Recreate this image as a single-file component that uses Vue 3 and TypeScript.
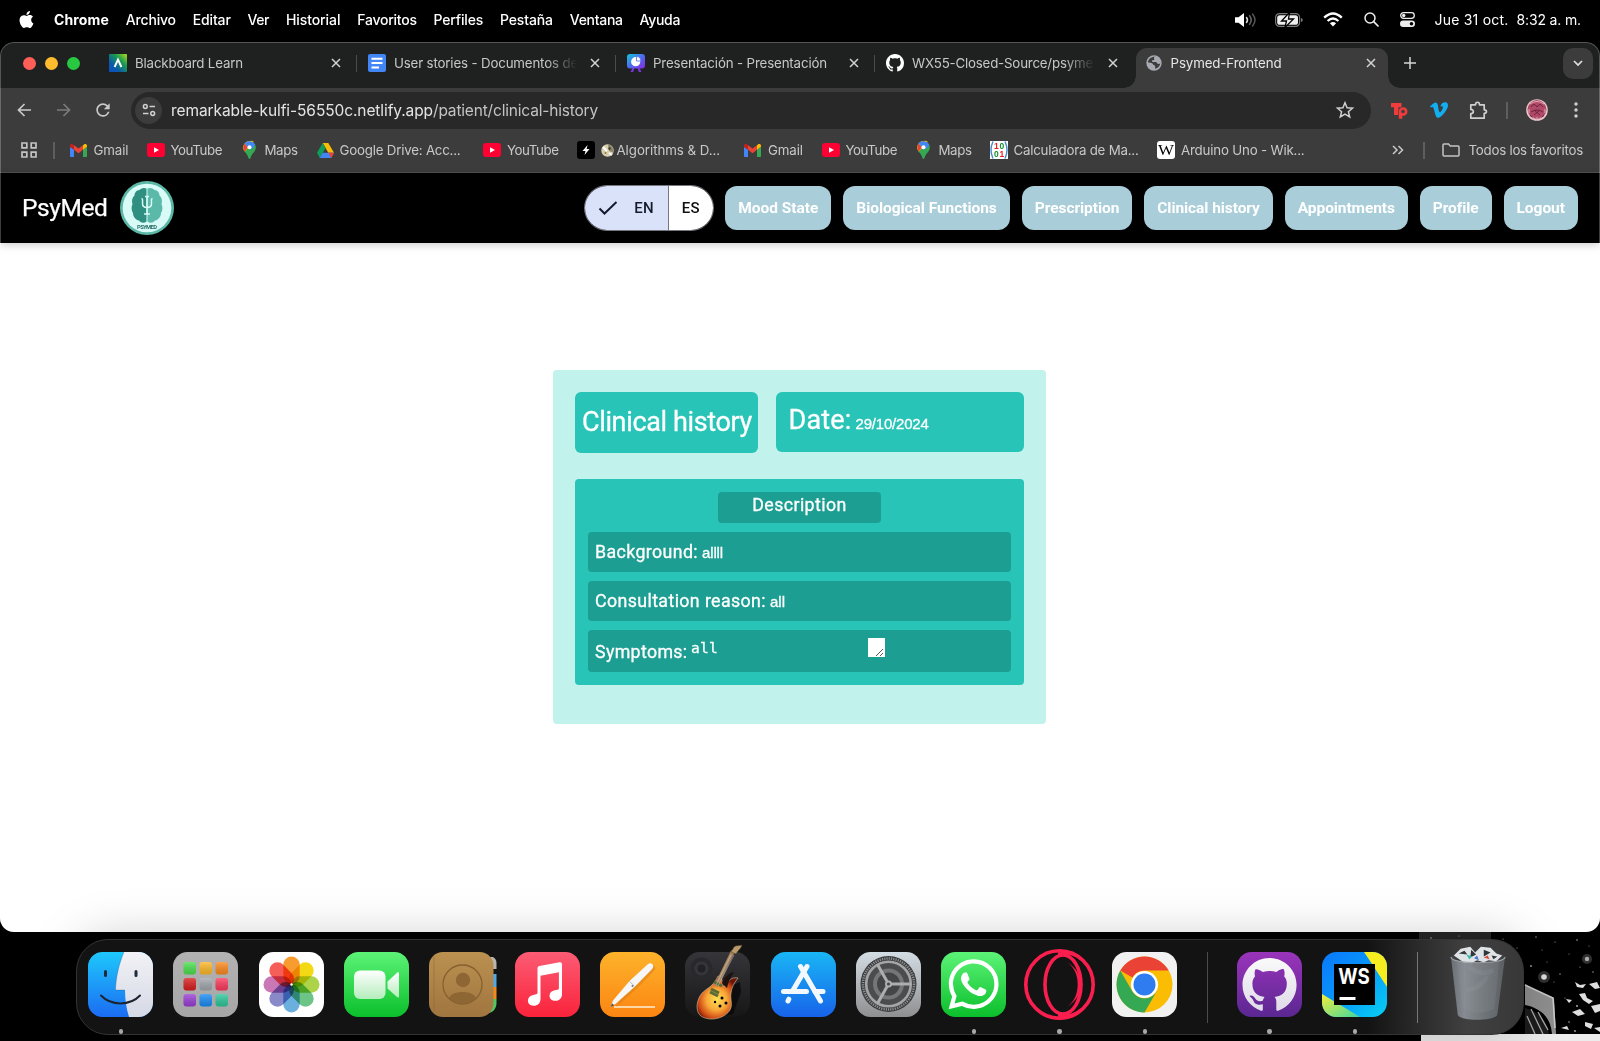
<script setup lang="ts">
import type { Directive } from 'vue'

/* Spreads a label evenly over the given number of pixels. */
const vFit: Directive<HTMLElement, number> = {
  mounted(el, { value }) {
    const count = (el.textContent ?? '').length
    const natural = el.getBoundingClientRect().width
    if (count > 0) el.style.letterSpacing = `${(value - natural) / count}px`
  },
}

interface Label { text: string; w: number }
interface Tab { icon: string; text: string; w: number; active?: boolean; sep?: boolean; faded?: boolean }
interface Bookmark extends Label { icon: string; iw: number; ih: number; pad: number; gap: number; emoji?: boolean }
interface DockApp { icon: string; running?: boolean }

const menus: Label[] = [
  { text: 'Archivo', w: 50 },
  { text: 'Editar', w: 38 },
  { text: 'Ver', w: 21.5 },
  { text: 'Historial', w: 54.5 },
  { text: 'Favoritos', w: 59.5 },
  { text: 'Perfiles', w: 49.5 },
  { text: 'Pestaña', w: 53 },
  { text: 'Ventana', w: 53 },
  { text: 'Ayuda', w: 40.5 },
]

const tabs: Tab[] = [
  { icon: 'blackboard', text: 'Blackboard Learn', w: 108, sep: true },
  { icon: 'docs', text: 'User stories - Documentos de', w: 184, sep: true, faded: true },
  { icon: 'slides', text: 'Presentación - Presentación', w: 174, sep: true },
  { icon: 'github', text: 'WX55-Closed-Source/psyme', w: 181, faded: true },
  { icon: 'globe', text: 'Psymed-Frontend', w: 111, active: true },
]

const bookmarks: Bookmark[] = [
  { icon: 'gmail', iw: 17, ih: 13, pad: 7, text: 'Gmail', w: 35, gap: 15 },
  { icon: 'youtube', iw: 18, ih: 14, pad: 6, text: 'YouTube', w: 51.5, gap: 18 },
  { icon: 'maps', iw: 13, ih: 18, pad: 9, text: 'Maps', w: 33, gap: 20.5 },
  { icon: 'drive', iw: 17, ih: 15, pad: 6, text: 'Google Drive: Acc...', w: 121, gap: 19 },
  { icon: 'youtube', iw: 18, ih: 14, pad: 6.5, text: 'YouTube', w: 51.5, gap: 22 },
  { icon: 'bolt', iw: 18, ih: 18, pad: 6, text: 'Algorithms & D...', w: 103.5, gap: 18, emoji: true },
  { icon: 'gmail', iw: 17, ih: 13, pad: 7, text: 'Gmail', w: 35, gap: 24 },
  { icon: 'youtube', iw: 18, ih: 14, pad: 6, text: 'YouTube', w: 51.5, gap: 18.5 },
  { icon: 'maps', iw: 13, ih: 18, pad: 8.5, text: 'Maps', w: 33, gap: 20 },
  { icon: 'matrix', iw: 18, ih: 18, pad: 6, text: 'Calculadora de Ma...', w: 125, gap: 18 },
  { icon: 'wiki', iw: 18, ih: 18, pad: 6, text: 'Arduino Uno - Wik...', w: 123.5, gap: 18.5 },
]

const navLinks: Label[] = [
  { text: 'Mood State', w: 80 },
  { text: 'Biological Functions', w: 140.5 },
  { text: 'Prescription', w: 84.5 },
  { text: 'Clinical history', w: 102.5 },
  { text: 'Appointments', w: 97 },
  { text: 'Profile', w: 45.5 },
  { text: 'Logout', w: 48.5 },
]

const dockMain: DockApp[] = [
  { icon: 'finder', running: true },
  { icon: 'launchpad' },
  { icon: 'photos' },
  { icon: 'facetime' },
  { icon: 'contacts' },
  { icon: 'music' },
  { icon: 'pages' },
  { icon: 'garageband' },
  { icon: 'appstore' },
  { icon: 'settings' },
  { icon: 'whatsapp', running: true },
  { icon: 'opera', running: true },
  { icon: 'chrome', running: true },
]
const dockRecent: DockApp[] = [
  { icon: 'githubdesktop', running: true },
  { icon: 'webstorm', running: true },
]

const petals = ['#f7941d', '#f2d600', '#a6cf38', '#5fbf7d', '#5ea8dc', '#7f7fc4', '#c66bb0', '#f5514b']
const pads = [
  ['#4be04e', '#fdb827', '#fb8a1e'],
  ['#d81e1e', '#a3a7ad', '#fc3a5d'],
  ['#9a3fd5', '#1a8cf5', '#2fc79a'],
]
const stars: number[][] = [
  [12, 6, 0.8], [28, 14, 0.5], [40, 4, 0.6], [55, 9, 1], [70, 12, 0.7], [84, 7, 0.6], [98, 16, 0.6], [117, 5, 0.7], [123, 18, 0.5],
  [128, 30, 0.5], [136, 10, 0.6], [141, 42, 0.7], [150, 22, 0.5], [158, 8, 0.8], [161, 35, 0.6],
  [170, 14, 0.5], [174, 40, 0.7], [158, 74, 1], [150, 90, 0.8], [177, 104, 0.8], [146, 66, 0.6], [135, 50, 0.5], [112, 34, 0.9], [156, 99, 0.9],
]
</script>

<template>
  <div class="screen">
    <svg class="sprite" width="0" height="0" aria-hidden="true">
      <defs>
        <linearGradient id="gBb" x1="1" y1="0" x2="0" y2="1"><stop offset="0" stop-color="#b4dc1a" /><stop offset=".35" stop-color="#1a9c50" /><stop offset=".7" stop-color="#0a5aa8" /><stop offset="1" stop-color="#0d4fc4" /></linearGradient>
        <linearGradient id="gSl" x1="0" y1="0" x2="1" y2="1"><stop offset="0" stop-color="#10c8d8" /><stop offset=".5" stop-color="#4c6cf0" /><stop offset="1" stop-color="#8a28e0" /></linearGradient>
        <linearGradient id="gFin" x1="0" y1="0" x2="0" y2="1"><stop offset="0" stop-color="#1ec8fc" /><stop offset="1" stop-color="#1b6cf2" /></linearGradient>
        <linearGradient id="gFin2" x1="0" y1="0" x2="0" y2="1"><stop offset="0" stop-color="#f2f2f5" /><stop offset="1" stop-color="#d5d9e6" /></linearGradient>
        <linearGradient id="gGreen" x1="0" y1="0" x2="0" y2="1"><stop offset="0" stop-color="#5cf377" /><stop offset="1" stop-color="#0bbf2b" /></linearGradient>
        <linearGradient id="gCam" x1="0" y1="0" x2="0" y2="1"><stop offset="0" stop-color="#fff" /><stop offset="1" stop-color="#b4edbb" /></linearGradient>
        <linearGradient id="gCon" x1="0" y1="0" x2="0" y2="1"><stop offset="0" stop-color="#bb9151" /><stop offset="1" stop-color="#a0753f" /></linearGradient>
        <linearGradient id="gMus" x1="0" y1="0" x2="0" y2="1"><stop offset="0" stop-color="#fb5c74" /><stop offset="1" stop-color="#fa233b" /></linearGradient>
        <linearGradient id="gPag" x1="0" y1="0" x2="0" y2="1"><stop offset="0" stop-color="#fdb32b" /><stop offset="1" stop-color="#fc8512" /></linearGradient>
        <linearGradient id="gApp" x1="0" y1="0" x2="0" y2="1"><stop offset="0" stop-color="#19b6f5" /><stop offset="1" stop-color="#1763ea" /></linearGradient>
        <linearGradient id="gSet" x1="0" y1="0" x2="0" y2="1"><stop offset="0" stop-color="#d3dde4" /><stop offset="1" stop-color="#8f8f91" /></linearGradient>
        <linearGradient id="gGit" x1="0" y1="0" x2="0" y2="1"><stop offset="0" stop-color="#9a34bb" /><stop offset="1" stop-color="#5a2791" /></linearGradient>
        <linearGradient id="gOct" x1="0" y1="0" x2="0" y2="1"><stop offset="0" stop-color="#fafafa" /><stop offset="1" stop-color="#dfdbe8" /></linearGradient>
        <linearGradient id="gWs" x1="0" y1="0" x2="1" y2="1"><stop offset="0" stop-color="#0a78fb" /><stop offset=".45" stop-color="#0894fb" /><stop offset="1" stop-color="#07d0f0" /></linearGradient>
        <linearGradient id="gWs2" x1="0" y1="0" x2="1" y2="1"><stop offset="0" stop-color="#f5ef3a" /><stop offset="1" stop-color="#3fd6a0" /></linearGradient>
        <linearGradient id="gTrash" x1="0" y1="0" x2="1" y2="0"><stop offset="0" stop-color="#6b7075" /><stop offset=".25" stop-color="#858b90" /><stop offset=".6" stop-color="#70757a" /><stop offset="1" stop-color="#5c6064" /></linearGradient>
        <linearGradient id="gPad" x1="0" y1="0" x2="0" y2="1"><stop offset="0" stop-color="#fff" stop-opacity=".22" /><stop offset="1" stop-color="#000" stop-opacity=".14" /></linearGradient>
        <linearGradient id="gGray" x1="0" y1="0" x2="0" y2="1"><stop offset="0" stop-color="#b2b2b2" /><stop offset="1" stop-color="#a6a6a6" /></linearGradient>
        <linearGradient id="gDark" x1="0" y1="0" x2="0" y2="1"><stop offset="0" stop-color="#36363a" /><stop offset="1" stop-color="#161617" /></linearGradient>
        <radialGradient id="gBody" cx=".48" cy=".55" r=".55"><stop offset="0" stop-color="#fee154" /><stop offset=".45" stop-color="#f9a838" /><stop offset=".8" stop-color="#cf4a16" /><stop offset="1" stop-color="#6b1508" /></radialGradient>
        <clipPath id="tile"><rect width="65" height="65" rx="14.500" /></clipPath>
      </defs>

      <!-- browser icons -->
      <symbol id="blackboard" viewBox="0 0 18 18"><rect width="18" height="18" rx="1" fill="url(#gBb)" /><path d="M5.600 13 9 5.500l3.400 7.500" fill="none" stroke="#fff" stroke-width="1.900" /></symbol>
      <symbol id="docs" viewBox="0 0 18 18"><rect width="18" height="18" rx="2" fill="#4285f4" /><path d="M3.500 4.700h11M3.500 9h11M3.500 13.400h7.500" stroke="#fff" stroke-width="2" /></symbol>
      <symbol id="slides" viewBox="0 0 18 18"><rect width="18" height="14.500" rx="3" fill="url(#gSl)" /><path d="m5.500 14-2 4h2.700l1.300-4zM12.500 14l2 4h-2.700l-1.300-4z" fill="#7a35e0" /><circle cx="8.700" cy="7.700" r="4.600" fill="#fff" /><path d="M9.500 7V2.500A4.500 4.500 0 0 1 13.800 7z" fill="#fff" stroke="#5a78f0" stroke-width=".9" /></symbol>
      <symbol id="github" viewBox="0 0 16 16"><path fill="#fff" d="M8 0C3.580 0 0 3.580 0 8c0 3.540 2.290 6.530 5.470 7.590.4.070.55-.17.55-.38 0-.19-.01-.82-.01-1.490-2.010.37-2.530-.49-2.690-.94-.09-.23-.48-.94-.82-1.130-.28-.15-.68-.52-.01-.53.63-.01 1.080.58 1.230.82.72 1.210 1.870.87 2.330.66.070-.52.280-.87.510-1.070-1.780-.2-3.640-.89-3.640-3.950 0-.87.310-1.590.82-2.150-.08-.2-.36-1.020.08-2.120 0 0 .67-.21 2.200.82.64-.18 1.320-.27 2-.27.68 0 1.360.09 2 .27 1.530-1.040 2.200-.82 2.200-.82.44 1.100.16 1.920.08 2.120.51.56.82 1.270.82 2.150 0 3.070-1.870 3.750-3.650 3.950.29.25.54.73.54 1.480 0 1.070-.01 1.930-.01 2.200 0 .21.15.46.55.38A8.013 8.013 0 0 0 16 8c0-4.420-3.580-8-8-8z" /></symbol>
      <symbol id="globe" viewBox="0 0 16 16"><circle cx="8" cy="8" r="7.700" fill="#a6a9b0" /><path d="M9.500 1.800c-1.500.2-2 1-1.300 1.900.5.800-.2 1.500-1.500 1.600-1.200.2-.8 1.300-.2 1.700h3c1.600.2 1.500 1.700 2.600 2 1 .2 1.600-.5 2.200-.4-.4 2.500-2.500 4.900-5 5.200-.6-1 .2-1.900-.2-2.800-.5-1.100-2.300-.9-2.400-2.200C5.500 7.500 3 7.600 1.900 7.300 2.300 4 5.500 1.400 9.500 1.800z" fill="#3c3c3c" /></symbol>
      <symbol id="gmail" viewBox="0 0 17 13"><path d="M0 3v9c0 .6.4 1 1 1h3V5.500z" fill="#4285f4" /><path d="M17 3v9c0 .6-.4 1-1 1h-3V5.500z" fill="#34a853" /><path d="M13 1.300V5.700l4-3V1.800C17 .2 15.200-.5 14 .4z" fill="#fbbc04" /><path d="M0 2.700v-1C0 .2 1.800-.5 3 .4L4 1.200v4.500z" fill="#c5221f" /><path d="M4 1.200 8.500 4.600 13 1.200v4.600L8.500 9.200 4 5.800z" fill="#ea4335" /></symbol>
      <symbol id="youtube" viewBox="0 0 18 14"><rect width="18" height="14" rx="3" fill="#f03" /><path d="M7 4.200v5.600L12 7z" fill="#fff" /></symbol>
      <symbol id="maps" viewBox="0 0 13 18"><path d="M6.500 0A6.300 6.300 0 0 1 12.800 6.400c0 4.300-4 5.600-5.200 10.300-.5 1.700-1.700 1.700-2.200 0C4.200 12 .2 10.700.2 6.400A6.300 6.300 0 0 1 6.500 0z" fill="#34a853" /><path d="M2 10.600 10.800.5a6.300 6.300 0 0 0-4.300-.5A6.300 6.300 0 0 0 .2 6.400c0 1.800.8 3 1.800 4.200z" fill="#fbbc04" /><path d="M4.800 6.200 1.600 2.500A6.500 6.500 0 0 0 .6 8.600L2 10.600z" fill="#ea4335" /><path d="M1.600 2.500A6.300 6.300 0 0 1 12.300 4L8.500 8.500 4.600 6z" fill="#4285f4" /><circle cx="6.500" cy="6.300" r="2" fill="#fff" /></symbol>
      <symbol id="drive" viewBox="0 0 17 15"><path d="M5.700 0h5.600L17 9.800h-5.700z" fill="#fbbc04" /><path d="M5.700 0 0 9.800 2.800 15l5.800-10z" fill="#0f9d58" /><path d="M5.600 9.800H17L14.200 15H2.800z" fill="#4285f4" /><path d="M11.300 9.800H17L14.200 15z" fill="#ea4335" /></symbol>
      <symbol id="bolt" viewBox="0 0 18 18"><rect width="18" height="18" rx="3" fill="#000" /><path d="M10.600 4 5.500 9.900h3L7.500 14l5-6H9.600z" fill="#fff" /></symbol>
      <symbol id="matrix" viewBox="0 0 18 18"><rect width="18" height="18" fill="#fff" /><path d="M3 .5q-4 8.500 0 17M15 .5q4 8.500 0 17" fill="none" stroke="#4a90c8" stroke-width="1.500" /></symbol>
      <symbol id="wiki" viewBox="0 0 18 18"><rect width="18" height="18" rx="3" fill="#fff" /></symbol>

      <!-- dock icons -->
      <symbol id="finder" viewBox="0 0 65 65"><g clip-path="url(#tile)"><rect width="65" height="65" fill="url(#gFin)" /><path d="M36 0C31 12 28 25 27.500 38h9.500c0 10 1.500 19 4 27h24V0z" fill="url(#gFin2)" /></g><path d="M17.500 19.500v4M48 19.500v4" stroke="#1f2b3a" stroke-width="3" stroke-linecap="round" /><path d="M13 43.500c10 10.500 29 10.500 39 0" fill="none" stroke="#1b2430" stroke-width="2" stroke-linecap="round" /><path d="M36 0C31 12 28 25 27.500 38h9.500" fill="none" stroke="#1d3a5a" stroke-opacity=".35" stroke-width=".7" /></symbol>
      <symbol id="launchpad" viewBox="0 0 65 65"><rect width="65" height="65" rx="14.500" fill="url(#gGray)" /><g v-for="(row, r) in pads" :key="r"><g v-for="(c, i) in row" :key="i" :transform="`translate(${10.500 + i * 16} ${10 + r * 16})`"><rect width="12.500" height="12.500" rx="3" :fill="c" /><rect width="12.500" height="12.500" rx="3" fill="url(#gPad)" /></g></g></symbol>
      <symbol id="photos" viewBox="0 0 65 65"><rect width="65" height="65" rx="14.500" fill="#fff" /><rect v-for="(c, i) in petals" :key="c" class="petal" x="24.300" y="4.500" width="16.400" height="28" rx="8.200" :fill="c" :transform="`rotate(${i * 45} 32.500 32.500)`" /><circle cx="32.500" cy="32.500" r="1.200" fill="#fff" /></symbol>
      <symbol id="facetime" viewBox="0 0 65 65"><rect width="65" height="65" rx="14.500" fill="url(#gGreen)" /><rect x="10" y="18.500" width="31.500" height="28.500" rx="6" fill="url(#gCam)" /><path d="M43.500 29.500 53 20.700c1-.8 2-.4 2 .8v22.800c0 1.200-1 1.600-2 .8L43.500 36.500z" fill="url(#gCam)" /></symbol>
      <symbol id="contacts" viewBox="0 0 69 65"><path d="M55 5h9c2 1 3.500 3 3.500 6v6H60z" fill="#b9b4ad" /><path d="M60 22h7.500v13H60z" fill="#4fa8ea" /><path d="M60 35h7.500v12H60z" fill="#f48a1c" /><path d="M60 47h7.500v4c0 5-3 9-7.500 10z" fill="#50c860" /><rect width="64.500" height="65" rx="14" fill="url(#gCon)" /><path d="M5 4.500v56" stroke="#8e6734" stroke-width="1" opacity=".5" /><circle cx="33.500" cy="32.500" r="19.500" fill="none" stroke="#86602f" stroke-width="1.300" /><circle cx="34" cy="28" r="7.200" fill="#8e6634" /><path d="M20 46c3-8 24-8 27 0-6 7-21 7-27 0z" fill="#8e6634" /></symbol>
      <symbol id="music" viewBox="0 0 65 65"><rect width="65" height="65" rx="14.500" fill="url(#gMus)" /><path d="M22.500 16.500c0-1.500.7-2.300 2-2.600l20-3.700c1.600-.3 2.500.4 2.500 2v30c0 4-2.800 6.600-6.700 6.600-3.400 0-5.800-1.900-5.800-5 0-3 2-4.900 5.300-5.500l2.700-.6c1-.2 1.400-.8 1.400-1.800V20.300L25.500 23.700v23c0 4.300-2.800 7.100-6.900 7.100-3.400 0-5.700-2-5.700-5.200 0-3 2-5 5.300-5.700l2.800-.6c1-.2 1.500-.8 1.500-1.800z" fill="#fff" /></symbol>
      <symbol id="pages" viewBox="0 0 65 65"><rect width="65" height="65" rx="14.500" fill="url(#gPag)" /><path d="M14 55h41" stroke="#fff0d8" stroke-width="1.400" /><path d="M15 52 31 29.500 48 13c1.700-1.700 3.600-1.500 4.800-.3s1.300 3-.3 4.700L35.500 35 14 54z" fill="#c96d10" opacity=".35" transform="translate(1.500 1.500)" /><path d="M10.500 55 13 48.500 29.500 29 47.500 12.500c1.700-1.500 3.600-1.500 4.800-.3s1.300 3-.2 4.700L35 34.500 16 51.500z" fill="#f6f6f6" /><path d="m29.500 29.500 5 4.500" stroke="#aaa" stroke-width=".8" /><circle cx="32.500" cy="34" r="1" fill="#777" /><path d="m10.500 55 1.500-3.800 2.300 2z" fill="#555" /></symbol>
      <symbol id="garageband" viewBox="0 0 65 65"><rect width="65" height="65" rx="14.500" fill="url(#gDark)" /><circle cx="16.500" cy="16.500" r="11" fill="#29292d" /><circle cx="16.500" cy="16.500" r="7" fill="#35353a" /><circle cx="16.500" cy="16.500" r="4" fill="#222226" /><path d="M43 35 55 30l1 10-8 22-12 3z" fill="#050505" opacity=".7" /><path d="M33 24c-2 4-3 6-6 9-4 4-10 6-13 13-4 9-2 18 6 20 9 3 21-1 25-8 3-6 0-10 1-17 .5-5 3-10 7-15-5-1-8 1-10 4l-3 4c-3 0-3-2-3-5 0-3-2-5-4-5z" fill="url(#gBody)" stroke="#d9c7a0" stroke-width=".6" /><path d="M37 31c2-5 6-10 12-11-4 6-6 11-7 16z" fill="#1e1210" /><path d="m31 34 17-35" stroke="#a78560" stroke-width="4" /><path d="m46 0 3-5c2-2 5-1 8-2-1 4-4 5-6 9z" fill="#b99a6a" stroke="#4a3a25" stroke-width=".5" /><path d="m29 30 8 4M26 37l8 4M25 40l8 4" stroke="#5a6a35" stroke-width="3" /><path d="m46 3-15 30M49 3 33 34" stroke="#eee" stroke-width=".4" /><circle cx="37" cy="46" r="1.500" /><circle cx="41" cy="51" r="1.500" /><circle cx="35" cy="54" r="1.500" /><circle cx="30" cy="50" r="1.200" /></symbol>
      <symbol id="appstore" viewBox="0 0 65 65"><rect width="65" height="65" rx="14.500" fill="url(#gApp)" /><g stroke="#f3f8ff" stroke-width="5" stroke-linecap="round" fill="none"><path d="M12.500 39.500h23M44 39.500h8" /><path d="M36 14.500 21.800 38.500M17.800 47.200l-.8 1.800" /><path d="M29.500 14.500 49.500 49" /></g></symbol>
      <symbol id="settings" viewBox="0 0 65 65"><rect width="65" height="65" rx="14.500" fill="url(#gSet)" /><circle cx="32.500" cy="32" r="28" fill="#3c3d3f" /><circle cx="32.500" cy="32" r="25.500" fill="none" stroke="#8e9092" stroke-width="2.500" stroke-dasharray="1.200 1.100" /><circle cx="32.500" cy="32" r="22.300" fill="#4a4c4e" stroke="#a3a5a7" stroke-width="2.600" /><circle cx="32.500" cy="32" r="13.500" fill="#434547" stroke="#747678" stroke-width="4" /><path d="M32.500 32h22.500M32.500 32 21.500 12.500M32.500 32 21.500 51.500" stroke="#acaeb0" stroke-width="3" /><circle cx="32.500" cy="32" r="3.500" fill="#acaeb0" /><circle cx="32.500" cy="32" r="1.600" fill="#48494b" /></symbol>
      <symbol id="whatsapp" viewBox="0 0 65 65"><rect width="65" height="65" rx="14.500" fill="url(#gGreen)" /><path transform="translate(7.500 7.200) scale(2.090)" fill="#fff" d="M17.472 14.382c-.297-.149-1.758-.867-2.030-.967-.273-.099-.471-.148-.67.150-.197.297-.767.966-.94 1.164-.173.199-.347.223-.644.075-.297-.150-1.255-.463-2.390-1.475-.883-.788-1.480-1.761-1.653-2.059-.173-.297-.018-.458.130-.606.134-.133.298-.347.446-.520.149-.174.198-.298.298-.497.099-.198.050-.371-.025-.520-.075-.149-.669-1.612-.916-2.207-.242-.579-.487-.5-.669-.510-.173-.008-.371-.01-.57-.01-.198 0-.52.074-.792.372-.272.297-1.040 1.016-1.040 2.479 0 1.462 1.065 2.875 1.213 3.074.149.198 2.096 3.200 5.077 4.487.709.306 1.262.489 1.694.625.712.227 1.360.195 1.871.118.571-.085 1.758-.719 2.006-1.413.248-.694.248-1.289.173-1.413-.074-.124-.272-.198-.57-.347m-5.421 7.403h-.004a9.870 9.870 0 0 1-5.031-1.378l-.361-.214-3.741.982.998-3.648-.235-.374a9.860 9.860 0 0 1-1.510-5.260c.001-5.450 4.436-9.884 9.888-9.884 2.640 0 5.122 1.030 6.988 2.898a9.825 9.825 0 0 1 2.893 6.994c-.003 5.450-4.437 9.884-9.885 9.884m8.413-18.297A11.815 11.815 0 0 0 12.050 0C5.495 0 .16 5.335.157 11.892c0 2.096.547 4.142 1.588 5.945L.057 24l6.305-1.654a11.882 11.882 0 0 0 5.683 1.448h.005c6.554 0 11.890-5.335 11.893-11.893a11.821 11.821 0 0 0-3.480-8.413z" /></symbol>
      <symbol id="opera" viewBox="0 0 65 65"><g fill="none" stroke="#fa1e4e" stroke-width="3.600"><circle cx="32.500" cy="32.500" r="33.700" /><ellipse cx="36" cy="32.500" rx="18" ry="29.500" /></g><path d="M39.500 10c15 8 15 37 0 45 19-10 19-35 0-45z" fill="#fa1e4e" /><path d="M31 1.500c10-1 18 1 23 6M31 63.500c10 1 18-1 23-6" fill="none" stroke="#fa1e4e" stroke-width="2.500" /></symbol>
      <symbol id="chrome" viewBox="0 0 65 65"><rect width="65" height="65" rx="14.500" fill="#f1f1f1" /><g transform="translate(32.500 32.500)"><circle r="28" fill="#fbbc04" /><path d="M-24.200-14A28 28 0 0 1 24.200-14H0A14 14 0 0 0-12.100-7z" fill="#ea4335" /><path d="M-24.200-14A28 28 0 0 0 0 28L12.100 7A14 14 0 0 1-12.100 7z" fill="#34a853" /><circle r="13.600" fill="#fff" /><circle r="11" fill="#2f7bf0" /></g></symbol>
      <symbol id="githubdesktop" viewBox="0 0 65 65"><rect width="65" height="65" rx="14.500" fill="url(#gGit)" /><path transform="translate(5.500 6) scale(3.380)" fill="url(#gOct)" d="M8 0C3.580 0 0 3.580 0 8c0 3.540 2.290 6.530 5.470 7.590.4.070.55-.17.55-.38 0-.19-.01-.82-.01-1.490-2.010.37-2.530-.49-2.690-.94-.09-.23-.48-.94-.82-1.130-.28-.15-.68-.52-.01-.53.63-.01 1.080.58 1.230.82.72 1.210 1.870.87 2.330.66.070-.52.280-.87.510-1.070-1.780-.2-3.640-.89-3.640-3.950 0-.87.310-1.590.82-2.150-.08-.2-.36-1.020.08-2.120 0 0 .67-.21 2.200.82.64-.18 1.320-.27 2-.27.68 0 1.360.09 2 .27 1.530-1.040 2.200-.82 2.200-.82.44 1.100.16 1.920.08 2.120.51.56.82 1.270.82 2.150 0 3.070-1.870 3.750-3.650 3.950.29.25.54.73.54 1.480 0 1.070-.01 1.930-.01 2.200 0 .21.15.46.55.38A8.013 8.013 0 0 0 16 8c0-4.420-3.580-8-8-8z" /></symbol>
      <symbol id="webstorm" viewBox="0 0 65 65"><g clip-path="url(#tile)"><rect width="65" height="65" fill="url(#gWs)" /><path d="M42 0h23v35L50 12z" fill="#f6ec20" /><path d="M0 42 38 65H0z" fill="url(#gWs2)" /></g><rect x="12" y="12" width="41" height="41" fill="#000" /><rect x="17.500" y="45" width="16" height="3" fill="#fff" /></symbol>
    </svg>

    <svg class="wallpaper" viewBox="0 0 181 109" width="181" height="109" aria-hidden="true">
      <rect width="72" height="8" fill="#262626" />
      <circle v-for="(s, i) in stars" :key="i" :cx="s[0]" :cy="s[1]" :r="s[2]" fill="#a8a8a8" />
      <circle cx="125" cy="45" r="6" fill="#777" opacity=".4" /><circle cx="125" cy="45" r="2.800" fill="#ddd" />
      <circle cx="168" cy="27" r="5" fill="#777" opacity=".4" /><circle cx="168" cy="27" r="2.200" fill="#aaa" />
      <path d="m156 50 5 3 6-1-3 4-6-1zM170 52l8-2 3 6-5 1zM160 62l6-1 2 5 6 3-4 3-6-4zM147 67l6 1-3 3zM172 74l9-2v7l-5 2zM153 80l8-3 5 5-7 2zM166 90l8 2-2 5-6-3zM142 96l6-2 2 4zM175 96l6-1v5z" fill="#dedede" />
      <path d="M106 52c8 6 20 10 29 14l2 36h-4C132 86 122 76 106 73z" fill="#8f8f8f" />
      <path d="M106 53 134 66l2 30" fill="none" stroke="#ccc" stroke-width="1.500" />
      <path d="M106 76c14 4 22 12 24 26h-24z" fill="#1c1c1c" /><path d="m112 77 12 25M108 84l8 18M119 80l10 18" stroke="#aaa" stroke-width="1.300" />
      <rect x="2" y="102" width="179" height="7" fill="#ececec" />
    </svg>

    <header class="menubar">
      <svg class="apple" viewBox="0 0 24 24" width="17" height="17"><path fill="#fff" d="M12.152 6.896c-.948 0-2.415-1.078-3.960-1.040-2.040.027-3.910 1.183-4.961 3.014-2.117 3.675-.546 9.103 1.519 12.090 1.013 1.454 2.208 3.090 3.792 3.039 1.520-.065 2.090-.987 3.935-.987 1.831 0 2.350.987 3.960.948 1.637-.026 2.676-1.480 3.676-2.948 1.156-1.688 1.636-3.325 1.662-3.415-.039-.013-3.182-1.221-3.220-4.857-.026-3.040 2.480-4.494 2.597-4.559-1.429-2.090-3.623-2.324-4.390-2.376-2-.156-3.675 1.090-4.610 1.090zM15.530 3.830c.843-1.012 1.400-2.427 1.245-3.830-1.207.052-2.662.805-3.532 1.818-.780.896-1.454 2.338-1.273 3.714 1.338.104 2.715-.688 3.559-1.701" /></svg>
      <nav class="menus">
        <b v-fit="55">Chrome</b>
        <span v-for="m in menus" :key="m.text" v-fit="m.w">{{ m.text }}</span>
      </nav>
      <div class="status">
        <svg width="22" height="16" viewBox="0 0 22 16"><path d="M0 5.200h3.500L9 1v14l-5.500-4.200H0z" fill="#fff" /><g fill="none" stroke-width="1.500" stroke-linecap="round"><path d="M11.500 5.500q2 2.500 0 5" stroke="#ddd" /><path d="M14.500 3.700q3.500 4.300 0 8.600" stroke="#666" /><path d="M17.500 2q5 6 0 12" stroke="#555" /></g></svg>
        <svg class="battery" width="28" height="14" viewBox="0 0 28 14"><rect x=".6" y=".6" width="24" height="12.800" rx="4" fill="none" stroke="#7a7a7a" stroke-width="1.200" /><path d="M26 5v4q1.800-.5 1.800-2T26 5z" fill="#7a7a7a" /><rect x="2.200" y="2.200" width="20.800" height="9.600" rx="2.600" fill="#eee" /><path d="M14.500-.5 6.500 8h5l-1.500 6.500L18.500 6h-5z" fill="#eee" stroke="#000" stroke-width="1.300" /></svg>
        <svg class="wifi" width="20" height="15" viewBox="0 0 20 15"><g fill="none" stroke="#fff" stroke-width="2.300"><path d="M1.200 5.700q8.800-8.400 17.600 0" /><path d="M4.600 9q5.400-5 10.800 0" /></g><path d="M10 14.500 6.900 11.300q3.100-2.600 6.200 0z" fill="#fff" /></svg>
        <svg class="search" width="15" height="15" viewBox="0 0 15 15"><circle cx="6" cy="6" r="5" fill="none" stroke="#eee" stroke-width="1.500" /><path d="m9.700 9.700 4.300 4.300" stroke="#eee" stroke-width="1.700" stroke-linecap="round" /></svg>
        <svg class="control" width="15" height="15" viewBox="0 0 15 15"><rect x=".7" y=".7" width="13.600" height="5.600" rx="2.800" fill="none" stroke="#eee" stroke-width="1.300" /><circle cx="3.700" cy="3.500" r="1.700" fill="#eee" /><rect y="8.400" width="15" height="6.600" rx="3.300" fill="#eee" /><circle cx="11.500" cy="11.700" r="1.800" fill="#000" /></svg>
        <span v-fit="74">Jue 31 oct.</span>
        <span v-fit="64.5" class="clock">8:32 a. m.</span>
      </div>
    </header>

    <div class="window">
      <div class="tabstrip">
        <div class="lights"><i class="red" /><i class="yellow" /><i class="green" /></div>
        <div v-for="t in tabs" :key="t.text" class="tab" :class="{ active: t.active, sep: t.sep }">
          <svg class="favicon" width="18" height="18"><use :href="`#${t.icon}`" /></svg>
          <div class="tab-label" :class="{ faded: t.faded }"><span v-fit="t.w">{{ t.text }}</span></div>
          <svg class="close" width="10" height="10" viewBox="0 0 10 10"><path d="m1 1 8 8M9 1 1 9" stroke="currentColor" stroke-width="1.500" /></svg>
        </div>
        <svg class="plus" width="12" height="12" viewBox="0 0 12 12"><path d="M6 0v12M0 6h12" stroke="#d5d5d5" stroke-width="1.500" /></svg>
        <button class="tab-search"><svg width="10" height="7" viewBox="0 0 10 7"><path d="m1 1 4 4 4-4" fill="none" stroke="#e0e0e0" stroke-width="1.700" /></svg></button>
      </div>

      <div class="toolbar">
        <svg class="back" width="15" height="14" viewBox="0 0 15 14"><path d="M14 7H1.500M7.500 1l-6 6 6 6" fill="none" stroke="#c9c9c9" stroke-width="1.700" /></svg>
        <svg class="forward" width="15" height="14" viewBox="0 0 15 14"><path d="M1 7h12.500M7.500 1l6 6-6 6" fill="none" stroke="#7b7b7b" stroke-width="1.700" /></svg>
        <svg class="reload" width="20" height="20" viewBox="0 0 24 24"><path fill="#c9c9c9" d="M17.650 6.350A7.958 7.958 0 0 0 12 4c-4.420 0-7.990 3.580-8 8s3.570 8 8 8c3.730 0 6.840-2.550 7.730-6h-2.080A5.990 5.990 0 0 1 12 18c-3.310 0-6-2.690-6-6s2.690-6 6-6c1.660 0 3.140.69 4.220 1.780L13 11h7V4l-2.350 2.350z" /></svg>
        <div class="omnibox">
          <div class="site"><svg width="14" height="14" viewBox="0 0 14 14"><g fill="none" stroke="#d0d0d0" stroke-width="1.500"><circle cx="3.300" cy="3.500" r="1.900" /><path d="M7.500 3.500H13M1 10.500h5.500" /><circle cx="10.700" cy="10.500" r="1.900" /></g></svg></div>
          <span class="url"><span v-fit="262">remarkable-kulfi-56550c.netlify.app</span><span v-fit="165" class="path">/patient/clinical-history</span></span>
          <svg class="fav" width="18" height="18" viewBox="0 0 18 18"><path d="m9 1.800 2.100 5 5.400.4-4.100 3.500 1.300 5.300L9 13.200 4.300 16l1.300-5.300L1.500 7.200l5.400-.4z" fill="none" stroke="#d0d0d0" stroke-width="1.500" /></svg>
        </div>
        <svg class="tp" width="17" height="17" viewBox="0 0 17 17"><path d="M0 1h10.500v4.200H7.500V13H3V5.200H0z" fill="#f03c3c" /><path fill-rule="evenodd" d="M7.500 17V9.500a4.600 4.600 0 1 1 4.700 4.600h-.6V17zM12 7.900a1.500 1.500 0 1 0 .01 3 1.500 1.500 0 0 0 0-3z" fill="#f03c3c" stroke="#3c3c3c" stroke-width=".5" /></svg>
        <svg class="vimeo" width="18" height="18" viewBox="0 0 24 24"><path fill="#12aef0" d="M23.977 6.416c-.105 2.338-1.739 5.543-4.894 9.609-3.268 4.247-6.026 6.370-8.290 6.370-1.409 0-2.578-1.294-3.553-3.881L5.322 11.400C4.603 8.816 3.834 7.522 3.010 7.522c-.179 0-.806.378-1.881 1.132L0 7.197c1.185-1.044 2.351-2.084 3.501-3.128C5.080 2.701 6.266 1.984 7.055 1.910c1.867-.18 3.016 1.100 3.447 3.838.465 2.953.789 4.789.971 5.507.539 2.450 1.131 3.674 1.776 3.674.502 0 1.256-.796 2.265-2.385 1.004-1.589 1.540-2.797 1.612-3.628.144-1.371-.395-2.061-1.614-2.061-.574 0-1.167.121-1.777.391 1.186-3.868 3.434-5.757 6.762-5.637 2.473.06 3.628 1.664 3.493 4.797z" /></svg>
        <svg class="puzzle" width="19" height="19" viewBox="0 0 19 19"><path d="M1.800 3.800h4.700c0-3.400 4-3.400 4 0h4.700v5c3 0 3 3.600 0 3.600v4.800H1.800v-4.600c3.400 0 3.400-4.200 0-4.200z" fill="none" stroke="#cfcfcf" stroke-width="1.700" stroke-linejoin="round" /></svg>
        <i class="bar" />
        <svg class="avatar" width="22" height="22" viewBox="0 0 22 22"><circle cx="11" cy="11" r="10.800" fill="#e8c8cc" /><circle cx="11" cy="10.600" r="9.500" fill="#b04a68" /><path d="M5 8q3-5 6 0 3-5 6 0M5 13q6-4 12 0M8 11l6 5M14 11l-6 5M4 16l3 3M18 16l-3 3" fill="none" stroke="#6e2440" stroke-width="1" /><path d="M4 5q7-5 14 0M3 10v4M19 10v4M7 18v3M11 18v3M15 18v3" fill="none" stroke="#e3a9b6" stroke-width="1" /></svg>
        <svg class="more" width="4" height="16" viewBox="0 0 4 16"><g fill="#d0d0d0"><circle cx="2" cy="2" r="1.700" /><circle cx="2" cy="8" r="1.700" /><circle cx="2" cy="14" r="1.700" /></g></svg>
      </div>

      <div class="bookmarks">
        <svg class="apps" width="16" height="16" viewBox="0 0 16 16"><path d="M1 1h4.800v4.800H1zM10.200 1H15v4.800h-4.800zM1 10.200h4.800V15H1zM10.200 10.200H15V15h-4.800z" fill="none" stroke="#c4c4c4" stroke-width="1.700" /></svg>
        <i class="bar" />
        <div v-for="(b, i) in bookmarks" :key="i" class="bookmark" :style="{ marginLeft: `${b.gap}px` }">
          <svg :width="b.iw" :height="b.ih" :style="{ marginRight: `${b.pad}px` }">
            <use :href="`#${b.icon}`" />
            <g v-if="b.icon === 'matrix'" class="digits">
              <text x="4" y="8" fill="#e22">1</text><text x="9.600" y="8" fill="#1a8a2a">0</text>
              <text x="4" y="16" fill="#1a8a2a">0</text><text x="9.600" y="16" fill="#e22">1</text>
            </g>
            <text v-if="b.icon === 'wiki'" class="wiki-letter" x="1" y="14" textLength="16" lengthAdjust="spacingAndGlyphs">W</text>
          </svg>
          <svg v-if="b.emoji" class="emoji" width="13" height="13" viewBox="0 0 13 13"><circle cx="6.500" cy="6.500" r="6.200" fill="#d8cfae" /><path d="M7 .5a6 6 0 0 1 5 8L8 7z" fill="#8a8468" /><path d="M2 3l4 4M8 9l3 2" stroke="#fff" stroke-width="2" /><circle cx="8.500" cy="4.500" r="1.200" fill="#3a382e" /><circle cx="4.500" cy="9" r="1" fill="#98783a" /></svg>
          <span v-fit="b.w">{{ b.text }}</span>
        </div>
        <svg class="overflow" width="12" height="10" viewBox="0 0 12 10"><path d="m1 1 4 4-4 4M6.500 1l4 4-4 4" fill="none" stroke="#c9c9c9" stroke-width="1.500" /></svg>
        <i class="bar" />
        <svg class="folder" width="18" height="14" viewBox="0 0 18 14"><path d="M1 2c0-.6.4-1 1-1h4.500l1.800 2H16c.6 0 1 .4 1 1v8c0 .6-.4 1-1 1H2c-.6 0-1-.4-1-1z" fill="none" stroke="#c4c4c4" stroke-width="1.500" /></svg>
        <span v-fit="114.5">Todos los favoritos</span>
      </div>

      <div class="page">
        <div class="navbar">
          <span v-fit="85.5" class="brand">PsyMed</span>
          <svg class="logo" width="54" height="54" viewBox="0 0 54 54">
            <circle cx="27" cy="27" r="27" fill="#5cb8a6" /><circle cx="27" cy="27" r="24.300" fill="#d9fbf8" />
            <path d="M26.500 7.500c-3-1.500-6 0-7 1.500-3 0-5 3-5 5.500-2.500 2-3 6-2 8.500-1.500 3-1 7 .5 9 0 4 3 7 6 7.500 2 2.500 5 3 7.500 1z" fill="#2f8f80" />
            <path d="M27.500 7.500c3-1.500 6 0 7 1.500 3 0 5 3 5 5.500 2.500 2 3 6 2 8.500 1.500 3 1 7-.5 9 0 4-3 7-6 7.500-2 2.500-5 3-7.500 1z" fill="#5bb9a9" />
            <path d="M21.500 17.500c1.500 0 1 3 1 5 0 3 2 4 4.500 4s4.500-1 4.500-4c0-2-.5-5 1-5M27 15.500v18M24 33h6M25 15.500h4" fill="none" stroke="#d9fbf8" stroke-width="1.500" />
            <text class="logo-text" x="17" y="47.500" textLength="20">PSYMED</text>
          </svg>
          <div class="lang">
            <button class="en"><svg width="20" height="16" viewBox="0 0 20 16"><path d="m1.500 8.500 5 5L18.500 2" fill="none" stroke="#151b2c" stroke-width="2" /></svg><span v-fit="19.5">EN</span></button>
            <button class="es"><span v-fit="18">ES</span></button>
          </div>
          <nav class="links">
            <button v-for="l in navLinks" :key="l.text" class="link"><span v-fit="l.w">{{ l.text }}</span></button>
          </nav>
        </div>

        <main class="content">
          <section class="card">
            <div class="head">
              <div class="title"><span v-fit="170">Clinical history</span></div>
              <div class="date"><span v-fit="63">Date:</span><span v-fit="73" class="value">29/10/2024</span></div>
            </div>
            <div class="details">
              <div class="caption"><span v-fit="94.5">Description</span></div>
              <div class="row"><span v-fit="103">Background:</span><span v-fit="21" class="value">allll</span></div>
              <div class="row second"><span v-fit="171">Consultation reason:</span><span v-fit="15" class="value">all</span></div>
              <div class="row third"><span v-fit="92.5">Symptoms:</span><span v-fit="27" class="mono">all</span>
                <svg class="grip" width="17" height="19" viewBox="0 0 17 19"><rect width="17" height="19" fill="#fff" /><path d="m8 18 7-7M12 18l3-3" stroke="#555" stroke-width="1" /></svg>
              </div>
            </div>
          </section>
        </main>
      </div>
    </div>

    <footer class="dock">
      <div v-for="a in dockMain" :key="a.icon" class="app">
        <svg width="65" height="65" :class="{ wide: a.icon === 'contacts' }"><use :href="`#${a.icon}`" /></svg>
        <i v-if="a.running" class="dot" />
      </div>
      <i class="divider" />
      <div v-for="a in dockRecent" :key="a.icon" class="app">
        <svg width="65" height="65">
          <use :href="`#${a.icon}`" />
          <text v-if="a.icon === 'webstorm'" class="ws" x="16.200" y="32.300" textLength="31.500" lengthAdjust="spacingAndGlyphs">WS</text>
        </svg>
        <i v-if="a.running" class="dot" />
      </div>
      <i class="divider second-divider" />
      <svg class="trash" width="58" height="75" viewBox="0 0 60 76">
        <path d="M2 10 9 70c.5 3 8 5.500 20 5.500S49.500 73 50 70l8-60z" fill="url(#gTrash)" />
        <path d="M8 14q22 7 44 0l-5 50q-17 8-33 0z" fill="#90969b" opacity=".2" />
        <path d="M20 20q14 12 26 4M18 45q14-2 22-14" fill="none" stroke="#b5bbc0" stroke-width="5" opacity=".1" />
        <ellipse cx="30" cy="10.500" rx="28" ry="6" fill="#3f4245" />
        <path d="m5 9 7-7 10-2 5 6 6-6 10 1 6 6 6 2-6 6-8-1-5 2-7-2-6 3-8-1z" fill="#dfe3e6" />
        <path d="m10 7 6-3 3 4zM23 3l5 5-6 3zM36 3l7 3-7 4zM44 9l6 1-4 3z" fill="#31363b" /><path d="m18 8 6 2-3 3z" fill="#3bb8a8" /><path d="m36 11 4-2 2 4z" fill="#d84a3a" /><path d="m26 12 3-3 2 5z" fill="#4a74d0" />
        <path d="M2 10.500c0 8 56 8 56 0" fill="none" stroke="#9da3a8" stroke-width="1.200" />
      </svg>
    </footer>
  </div>
</template>

<style>
html, body { margin: 0; background: #000; }
</style>

<style scoped>
.screen { position: relative; width: 1600px; height: 1041px; overflow: hidden; background: #000; font-family: Inter, "Noto Sans", sans-serif; color: #fff; }
.screen *, .screen *::before, .screen *::after { box-sizing: border-box; }
.sprite { position: absolute; }
.wallpaper { position: absolute; right: 0; bottom: 0; }
svg { display: block; flex: none; overflow: visible; }
symbol { overflow: visible; }
.petal { mix-blend-mode: multiply; fill-opacity: .92; }
span, b { display: inline-block; white-space: pre; flex: none; }
button { border: 0; margin: 0; padding: 0; font: inherit; color: inherit; }

.menubar { height: 42px; display: flex; align-items: center; padding: 0 19px 3px 18px; font-size: 14px; font-weight: 500; }
.apple { margin-top: -1px; }
.menus { display: flex; gap: 16.85px; margin-left: 19px; }
.status { margin-left: auto; display: flex; align-items: center; font-weight: 400; }
.battery { margin-left: 18px; }
.wifi { margin-left: 20px; }
.search { margin-left: 21px; }
.control { margin: 0 20px 0 21px; }
.clock { margin-left: 8px; }

.window { position: relative; height: 890px; border-radius: 14px; overflow: hidden; background: #1f2120; display: flex; flex-direction: column; }
.window::after { content: ""; position: absolute; inset: 0; border-radius: 14px; border: 1px solid rgba(255, 255, 255, .24); border-bottom: 0; pointer-events: none; }

.tabstrip { height: 46px; flex: none; display: flex; align-items: center; font-size: 13.3px; color: #c6c8c7; padding-bottom: 4px; }
.lights { display: flex; gap: 8.8px; margin-left: 23px; width: 74.500px; }
.lights i { width: 13px; height: 13px; border-radius: 50%; }
.red { background: #ff5f57; }
.yellow { background: #febc2e; }
.green { background: #28c840; }
.tab { position: relative; width: 259px; height: 40px; padding-left: 11px; display: flex; align-items: center; flex: none; }
.tab.sep::after { content: ""; position: absolute; right: 0; top: 12px; width: 1px; height: 17px; background: #4a4c4b; }
.tab-label { width: 184px; margin-left: 8.500px; overflow: hidden; }
.tab-label.faded { mask-image: linear-gradient(90deg, #000 152px, transparent 183px); }
.close { margin-left: 11.500px; color: #d2d2d2; }
.tab.active { color: #e6e6e6; height: 40px; align-self: flex-end; margin: 0 0 -4px 2.500px; width: 252px; background: #3c3c3c; border-radius: 11px 11px 0 0; padding: 0 0 10px 9.500px; }
.tab.active .favicon { width: 16px; height: 16px; margin-right: 1px; }
.tab.active .tab-label { width: 184px; margin-left: 8px; }
.tab.active .close { margin-left: 11px; }
.tab.active::before, .tab.active::after { content: ""; position: absolute; bottom: 0; width: 12px; height: 12px; }
.tab.active::before { left: -12px; background: radial-gradient(circle at 0 0, transparent 11.500px, #3c3c3c 12px); }
.tab.active::after { right: -12px; background: radial-gradient(circle at 100% 0, transparent 11.500px, #3c3c3c 12px); }
.plus { margin-left: 16px; }
.tab-search { margin: 1px 7px 0 auto; width: 30px; height: 31px; border-radius: 10px; background: #3c3c3c; display: grid; place-items: center; }

.toolbar { height: 44px; flex: none; display: flex; align-items: center; background: #3c3c3c; }
.back { margin-left: 17px; }
.forward { margin-left: 24px; }
.reload { margin-left: 22px; }
.omnibox { margin-left: 18px; width: 1240px; height: 37px; border-radius: 19px; background: #282828; display: flex; align-items: center; padding: 0 17px 0 4px; }
.site { width: 27px; height: 27px; border-radius: 50%; background: #3c3c3c; display: grid; place-items: center; }
.url { margin-left: 9px; font-size: 15.500px; color: #e3e3e3; display: flex; }
.path { color: #c3c3c3; }
.fav { margin-left: auto; }
.tp { margin-left: 20px; }
.vimeo { margin-left: 21.500px; }
.puzzle { margin-left: 21px; }
.bar { width: 1.500px; height: 17px; background: #5e5e5e; flex: none; }
.toolbar .bar { margin-left: 18.500px; }
.avatar { margin-left: 18px; }
.more { margin-left: 26px; }

.bookmarks { height: 41px; flex: none; display: flex; align-items: center; background: #3c3c3c; font-size: 13.300px; color: #c8c8c8; padding-bottom: 4px; border-bottom: 1px solid #505050; }
.apps { margin: 0 16.500px 0 20.500px; }
.bookmark { display: flex; align-items: center; }
.emoji { margin-right: 3px; }
.digits { font: 700 8.500px "Liberation Sans", sans-serif; }
.wiki-letter { font: 15px "Liberation Serif", serif; fill: #000; }
.overflow { margin: 0 19px 0 auto; }
.folder { margin: 0 9px 0 17px; }
.bookmarks > span { margin-right: 17px; }

.page { flex: 1; background: #fff; display: flex; flex-direction: column; font-family: Roboto, sans-serif; }
.navbar { height: 70px; flex: none; background: #000; display: flex; align-items: center; padding: 0 22px; box-shadow: 0 2px 8px rgba(0, 0, 0, .2); }
.brand { font-size: 24.500px; margin-top: -1px; -webkit-text-stroke: .25px #fff; }
.logo { margin-left: 12.500px; }
.logo-text { font: 700 5.800px Roboto, sans-serif; fill: #2a6f68; }
.lang { margin-left: auto; width: 129.500px; height: 46px; border: 1px solid #75777f; border-radius: 23px; overflow: hidden; display: flex; font-size: 15px; font-weight: 500; color: #111; }
.en { width: 83.500px; background: #dae2f9; color: #151b2c; border-right: 1px solid #75777f; display: flex; align-items: center; padding-left: 13px; gap: 16px; }
.es { flex: 1; background: #fff; padding-left: 13px; text-align: left; }
.links { display: flex; gap: 12px; margin-left: 11.500px; }
.link { height: 44px; padding: 0 13px; border-radius: 12px; background: #a9cdd9; color: #fff; font-size: 15.500px; font-weight: 700; }

.content { flex: 1; display: flex; justify-content: center; align-items: flex-start; padding: 127px 1px 0 0; }
.card { width: 493px; height: 354px; border-radius: 4px; background: #c1f2ec; padding: 22px; }
.head { display: flex; gap: 18px; }
.title { width: 183px; height: 61px; border-radius: 6px; background: #28c4b7; padding-left: 7px; font-size: 27px; line-height: 60px; }
.date { width: 249px; height: 60px; border-radius: 6px; background: #28c4b7; padding-left: 13px; font-size: 27px; line-height: 57px; display: flex; align-items: baseline; }
.value { font-family: "Liberation Sans", sans-serif; font-size: 15px; margin-left: 4px; }
.details { margin-top: 26px; width: 449px; height: 206px; border-radius: 4px; background: #28c4b7; padding: 13px 13px 0; font-size: 17.800px; }
.head, .details { -webkit-text-stroke: .3px #fff; }
.caption { width: 163px; height: 31px; border-radius: 4px; background: #1c9e92; margin: 0 auto; text-align: center; line-height: 26px; }
.row { margin-top: 9px; height: 40px; border-radius: 4px; background: #1c9e92; padding-left: 7px; line-height: 40px; display: flex; align-items: baseline; }
.row.third { height: 42px; line-height: 43px; }
.mono { font-family: "DejaVu Sans Mono", monospace; font-size: 14.500px; margin-left: 3.500px; line-height: 37px; align-self: flex-start; }
.grip { margin: 8px 0 0 150px; align-self: flex-start; }

.dock { position: absolute; left: 76px; top: 939px; width: 1448px; height: 96px; border-radius: 32px; border: 1px solid #343434; background: linear-gradient(90deg, #131313 1290px, #2c2c2c 1345px, #404040 1390px, #383838 100%); box-shadow: 0 0 50px rgba(0, 0, 0, .22); display: flex; align-items: flex-start; padding: 12px 0 0 11px; }
.app { width: 65px; margin-right: 20.350px; position: relative; flex: none; }
.app .wide { width: 69px; }
.ws { font: 700 21px Inter, sans-serif; fill: #fff; }
.dot { position: absolute; left: 30.500px; top: 77px; width: 4.500px; height: 4.500px; border-radius: 50%; background: #a8a8a8; }
.divider { width: 1px; height: 71px; background: #4c4c4c; margin: 0 28.500px 0 10px; flex: none; }
.second-divider { margin: 0 31px 0 9px; background: #777; }
.trash { margin-top: -6px; }
</style>
